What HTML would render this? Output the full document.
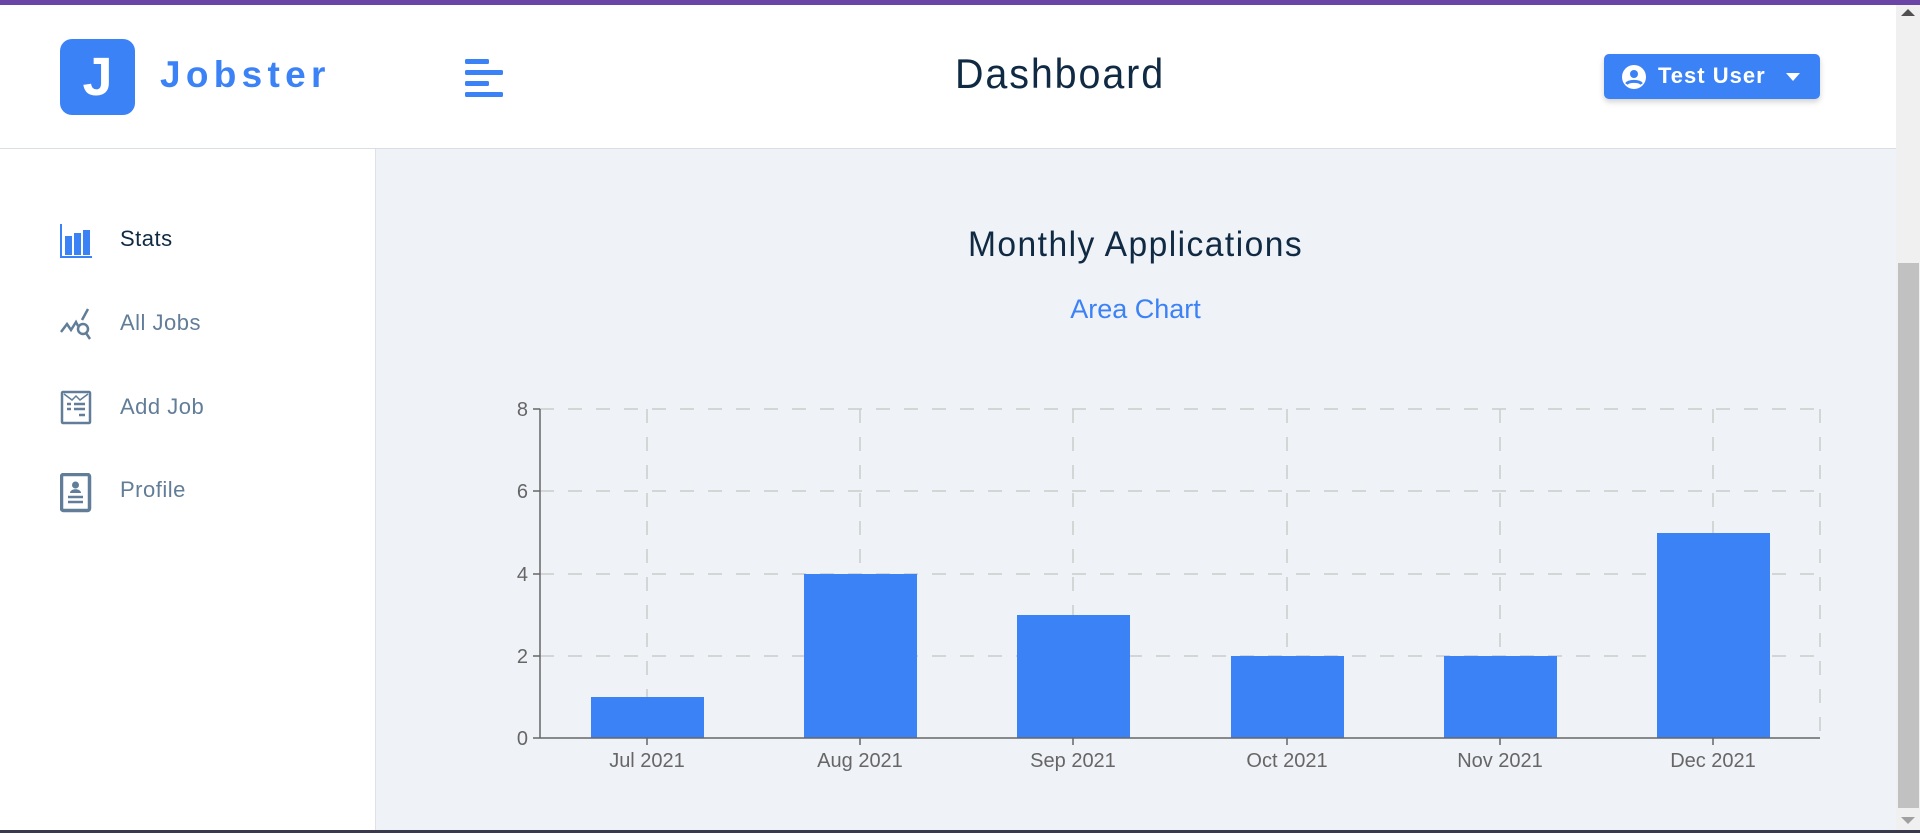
<!DOCTYPE html>
<html><head><meta charset="utf-8"><style>
*{margin:0;padding:0;box-sizing:border-box}
body{width:1920px;height:833px;overflow:hidden;background:#fff;font-family:"Liberation Sans",sans-serif;position:relative}
.top{position:absolute;left:0;top:0;width:1920px;height:5px;background:#6b45a6}
.hdr{position:absolute;left:0;top:5px;width:1896px;height:144px;background:#fff;border-bottom:1px solid #d9dee5}
.main{position:absolute;left:375px;top:149px;width:1521px;height:681px;background:#eff2f7;border-left:1px solid #dde2e8}
.logo{position:absolute;left:60px;top:39px;width:75px;height:76px;background:#3b82f6;border-radius:12px;color:#fff;font:bold 54px "Liberation Sans",sans-serif;text-align:center;line-height:76px}
.brand{position:absolute;left:160px;top:54px;font:bold 37px "Liberation Sans",sans-serif;letter-spacing:5.3px;color:#3b82f6}
.ham{position:absolute;left:465px;top:59px}
.title{position:absolute;left:900px;width:320px;text-align:center;top:50px;font-size:42px;letter-spacing:2px;color:#102a43;transform:scaleX(.94)}
.btn{position:absolute;left:1604px;top:54px;width:216px;height:45px;background:#3b82f6;border-radius:5px;box-shadow:0 3px 6px rgba(0,0,0,.18);color:#fff;font-size:22px;letter-spacing:1px;font-weight:bold}
.nav{position:absolute;left:60px;font-size:22px;color:#627d98;letter-spacing:.5px}
.nav svg{position:absolute;left:0;top:-2px}
.nav span{position:absolute;left:60px;top:0;white-space:nowrap}
.sb{position:absolute;left:1896px;top:5px;width:24px;height:825px;background:#f0f0f0}
.thumb{position:absolute;left:1898px;top:263px;width:21px;height:545px;background:#c1c1c1}
.bot{position:absolute;left:0;top:830px;width:1920px;height:3px;background:#3a3a4a}
</style></head><body>
<div class="top"></div>
<div class="hdr"></div>
<div class="main"></div>
<div class="logo">J</div>
<div class="brand">Jobster</div>
<svg class="ham" width="38" height="38" viewBox="0 0 38 38"><g fill="#3b82f6"><rect x="0" y="0" width="24" height="5" rx="1.5"/><rect x="0" y="11" width="38" height="5" rx="1.5"/><rect x="0" y="22" width="24" height="5" rx="1.5"/><rect x="0" y="33" width="38" height="5" rx="1.5"/></g></svg>
<div class="title">Dashboard</div>
<div class="btn">
<svg style="position:absolute;left:18px;top:11px" width="24" height="24" viewBox="0 0 24 24"><circle cx="12" cy="12" r="12" fill="#fff"/><circle cx="12" cy="9" r="4" fill="#3b82f6"/><path d="M4.5 19c2-3.5 13-3.5 15 0" stroke="#3b82f6" stroke-width="3" fill="none"/></svg>
<span style="position:absolute;left:54px;top:9px">Test User</span>
<svg style="position:absolute;left:182px;top:19px" width="14" height="8"><path d="M0 0h14L7 8z" fill="#fff"/></svg>
</div>

<div class="nav" style="top:226px;color:#102a43"><svg width="32" height="34" viewBox="0 0 32 34"><path d="M1 0v33h31" stroke="#3b82f6" stroke-width="2" fill="none"/><rect x="5" y="12" width="7" height="19" fill="#3b82f6"/><rect x="14" y="9" width="7" height="22" fill="#3b82f6"/><rect x="23" y="6" width="7" height="25" fill="#3b82f6"/></svg><span>Stats</span></div>
<div class="nav" style="top:310px"><svg width="34" height="34" viewBox="0 0 34 34"><path d="M1 24l6-8 4 6 5-8 2 4M22 12l6-11" stroke="#627d98" stroke-width="2.5" fill="none"/><circle cx="23" cy="21" r="5" stroke="#627d98" stroke-width="2.5" fill="none"/><path d="M26 25l4 6" stroke="#627d98" stroke-width="2.5"/></svg><span>All Jobs</span></div>
<div class="nav" style="top:392px"><svg width="32" height="36" viewBox="0 0 32 36"><rect x="2" y="2" width="28" height="31" rx="1" stroke="#627d98" stroke-width="2.5" fill="none"/><path d="M4 4l8 6 4-4 4 4 8-6" stroke="#627d98" stroke-width="1.5" fill="none"/><path d="M7 14h4M14 14h11M7 19h4M14 19h11M19 25h6" stroke="#627d98" stroke-width="2.5"/></svg><span style="top:2px">Add Job</span></div>
<div class="nav" style="top:475px"><svg width="32" height="40" viewBox="0 0 32 40"><rect x="1.5" y="1.5" width="28" height="36" rx="2" stroke="#627d98" stroke-width="3.5" fill="none"/><circle cx="15.5" cy="12" r="3.5" fill="#627d98"/><path d="M10 20c0-5 11-5 11 0z" fill="#627d98"/><path d="M8 24h15M8 29h15" stroke="#627d98" stroke-width="2.5"/></svg><span style="top:2px">Profile</span></div>

<div style="position:absolute;left:375px;width:1521px;top:225px;text-align:center;font-size:35px;letter-spacing:1.5px;color:#102a43"><span style="display:inline-block;transform:scaleX(.96)">Monthly Applications</span></div>
<div style="position:absolute;left:375px;width:1521px;top:294px;text-align:center;font-size:27px;color:#3b82f6">Area Chart</div>

<svg style="position:absolute;left:0;top:0" width="1920" height="833">
<g stroke="#ccc" stroke-width="1.5" stroke-dasharray="14 14" fill="none">
<line x1="540" y1="409" x2="1820" y2="409"/><line x1="540" y1="491" x2="1820" y2="491"/><line x1="540" y1="574" x2="1820" y2="574"/><line x1="540" y1="656" x2="1820" y2="656"/>
<line x1="647" y1="409" x2="647" y2="738"/><line x1="860" y1="409" x2="860" y2="738"/><line x1="1073" y1="409" x2="1073" y2="738"/><line x1="1287" y1="409" x2="1287" y2="738"/><line x1="1500" y1="409" x2="1500" y2="738"/><line x1="1713" y1="409" x2="1713" y2="738"/><line x1="1820" y1="409" x2="1820" y2="738"/>
</g>
<g fill="#3b82f6">
<rect x="591" y="697" width="113" height="41"/>
<rect x="804" y="574" width="113" height="164"/>
<rect x="1017" y="615" width="113" height="123"/>
<rect x="1231" y="656" width="113" height="82"/>
<rect x="1444" y="656" width="113" height="82"/>
<rect x="1657" y="533" width="113" height="205"/>
</g>
<g stroke="#666" stroke-width="1.5">
<line x1="540" y1="409" x2="540" y2="738"/><line x1="540" y1="738" x2="1820" y2="738"/>
<line x1="533" y1="409" x2="540" y2="409"/><line x1="533" y1="491" x2="540" y2="491"/><line x1="533" y1="574" x2="540" y2="574"/><line x1="533" y1="656" x2="540" y2="656"/><line x1="533" y1="738" x2="540" y2="738"/>
<line x1="647" y1="738" x2="647" y2="745"/><line x1="860" y1="738" x2="860" y2="745"/><line x1="1073" y1="738" x2="1073" y2="745"/><line x1="1287" y1="738" x2="1287" y2="745"/><line x1="1500" y1="738" x2="1500" y2="745"/><line x1="1713" y1="738" x2="1713" y2="745"/>
</g>
<g font-family="Liberation Sans, sans-serif" font-size="20" fill="#666">
<g text-anchor="end"><text x="528" y="416">8</text><text x="528" y="498">6</text><text x="528" y="581">4</text><text x="528" y="663">2</text><text x="528" y="745">0</text></g>
<g text-anchor="middle"><text x="647" y="767">Jul 2021</text><text x="860" y="767">Aug 2021</text><text x="1073" y="767">Sep 2021</text><text x="1287" y="767">Oct 2021</text><text x="1500" y="767">Nov 2021</text><text x="1713" y="767">Dec 2021</text></g>
</g>
</svg>
<div class="sb"></div><div class="thumb"></div>
<svg style="position:absolute;left:1901px;top:9px" width="14" height="8"><path d="M0 7h14L7 0z" fill="#505050"/></svg>
<svg style="position:absolute;left:1901px;top:817px" width="14" height="8"><path d="M0 0h14L7 7z" fill="#a0a0a0"/></svg>
<div class="bot"></div>
</body></html>
